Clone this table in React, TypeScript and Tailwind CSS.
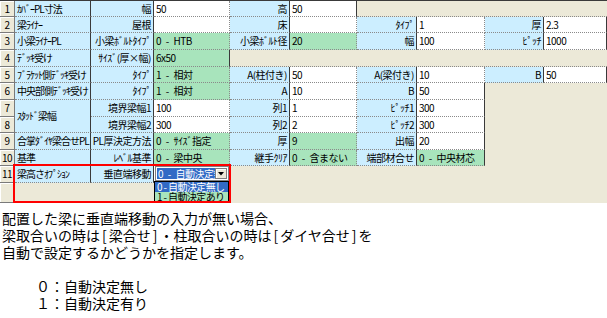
import React from "react";

type K = "l1" | "l2" | "lab" | "val" | "grn" | "bg" | "sel";
interface Cell {
  k: K;
  t?: string;
  span?: 2 | 4 | 6 | 9;
  end?: boolean;
  bb?: boolean;
  rs?: boolean;
}

const c = (k: K, t = "", o: Partial<Cell> = {}): Cell => ({ k, t, ...o });

const rows: Cell[][] = [
  [c("l1", "ｶﾊﾞｰPL寸法"), c("l2", "幅"), c("val", "50"), c("lab", "高"), c("val", "50", { end: true }), c("bg", "", { span: 4, bb: true })],
  [c("l1", "梁ﾗｲﾅｰ"), c("l2", "屋根"), c("val", ""), c("lab", "床"), c("val", ""), c("lab", "ﾀｲﾌﾟ"), c("val", "1"), c("lab", "厚"), c("val", "2.3", { end: true })],
  [c("l1", "小梁ﾗｲﾅｰPL"), c("l2", "小梁ﾎﾞﾙﾄﾀｲﾌﾟ"), c("grn", "0 - HTB"), c("lab", "小梁ﾎﾞﾙﾄ径"), c("grn", "20"), c("lab", "幅"), c("val", "100"), c("lab", "ﾋﾟｯﾁ"), c("val", "1000", { end: true })],
  [c("l1", "ﾃﾞｯｷ受け"), c("l2", "ｻｲｽﾞ(厚×幅)"), c("grn", "6x50", { end: true }), c("bg", "", { span: 6, bb: true })],
  [c("l1", "ﾌﾞﾗｹｯﾄ側ﾃﾞｯｷ受け"), c("l2", "ﾀｲﾌﾟ"), c("grn", "1 - 相対"), c("lab", "A(柱付き)"), c("val", "50"), c("lab", "A(梁付き)"), c("val", "10"), c("lab", "B"), c("val", "50", { end: true })],
  [c("l1", "中央部側ﾃﾞｯｷ受け"), c("l2", "ﾀｲﾌﾟ"), c("grn", "1 - 相対"), c("lab", "A"), c("val", "10"), c("lab", "B"), c("val", "50", { end: true }), c("bg", "", { span: 2 })],
  [c("l1", "ｽﾀｯﾄﾞ梁幅", { rs: true }), c("l2", "境界梁幅1"), c("val", "100"), c("lab", "列1"), c("val", "1"), c("lab", "ﾋﾟｯﾁ1"), c("val", "300", { end: true }), c("bg", "", { span: 2 })],
  [c("l2", "境界梁幅2"), c("val", "300"), c("lab", "列2"), c("val", "2"), c("lab", "ﾋﾟｯﾁ2"), c("val", "300", { end: true }), c("bg", "", { span: 2 })],
  [c("l1", "合掌ﾀﾞｲﾔ梁合せPL"), c("l2", "PL厚決定方法"), c("grn", "0 - ｻｲｽﾞ指定"), c("lab", "厚"), c("grn", "9"), c("lab", "出幅"), c("val", "20", { end: true }), c("bg", "", { span: 2 })],
  [c("l1", "基準"), c("l2", "ﾚﾍﾞﾙ基準"), c("grn", "0 - 梁中央"), c("lab", "継手ｸﾘｱ"), c("grn", "0 - 含まない"), c("lab", "端部材合せ"), c("grn", "0 - 中央材芯", { end: true }), c("bg", "", { span: 2 })],
  [c("l1", "梁高さｵﾌﾟｼｮﾝ"), c("l2", "垂直端移動"), c("sel"), c("bg", "", { span: 6 })],
];

const base =
  "flex items-center min-w-0 overflow-hidden whitespace-pre border-b border-r [border-bottom-style:dotted] border-b-[#8a8a8a]";

function spanClass(s?: number) {
  if (s === 2) return "col-span-2";
  if (s === 4) return "col-span-4";
  if (s === 6) return "col-span-6";
  if (s === 9) return "col-span-9";
  return "";
}

function CellView({ cell }: { cell: Cell }) {
  const { k, t } = cell;
  if (k === "bg") {
    return (
      <div
        className={
          "bg-[#ECE9D8] " +
          spanClass(cell.span) +
          (cell.bb ? " border-b [border-bottom-style:dotted] border-b-[#8a8a8a]" : "")
        }
      />
    );
  }
  if (k === "sel") {
    return (
      <div className="bg-white border-b border-r border-r-[#3a3a3a] [border-bottom-style:dotted] border-b-[#8a8a8a] pl-[1px] flex items-start">
        <div className="flex h-[15px] w-[74px] border border-[#7f7f7f] bg-white p-[1px]">
          <div className="flex-1 min-w-0 bg-[#316AC5] text-white pl-[1px] overflow-hidden whitespace-pre flex items-center">
            0 - 自動決定無し
          </div>
          <div className="w-[12px] shrink-0 bg-[#ECE9D8] border border-[#808080] shadow-[inset_1px_1px_0_#ffffff] flex items-center justify-center">
            <svg width="6" height="4" viewBox="0 0 6 4">
              <polygon points="0,0 6,0 3,3.5" fill="#000" />
            </svg>
          </div>
        </div>
      </div>
    );
  }
  let cls = base;
  if (k === "l1") cls += " bg-[#CCEEFF] pl-[2px] border-r-[#3a3a3a] tracking-[-1px]";
  if (k === "l2" || k === "lab") cls += " bg-[#CCEEFF] justify-end pr-[2px] border-r-[#3a3a3a]";
  if (k === "val")
    cls += cell.end
      ? " bg-white pl-[2px] border-r-[#3a3a3a]"
      : " bg-white pl-[2px] [border-right-style:dotted] border-r-[#8a8a8a]";
  if (k === "grn")
    cls += cell.end
      ? " bg-[#A8E4BC] pl-[2px] border-r-[#3a3a3a]"
      : " bg-[#A8E4BC] pl-[2px] [border-right-style:dotted] border-r-[#8a8a8a]";
  if (cell.rs) cls += " row-span-2";
  return <div className={cls}>{t}</div>;
}

const rowNum =
  "flex items-center justify-center bg-[#ECE9D8] border-r border-b border-r-[#7a7a7a] border-b-[#7a7a7a] shadow-[inset_1px_1px_0_#ffffff]";

export default function App() {
  return (
    <div className="w-[607px] h-[318px] bg-white overflow-hidden font-['Noto_Sans_CJK_JP','Noto_Sans',sans-serif] text-black">
      <div className="relative">
        <div className="grid grid-cols-[15px_76px_63px_76px_60px_67px_60px_68px_59px_63px] grid-rows-[16px_16px_17px_17px_16px_17px_17px_16px_17px_16px_17px_20px] border-t border-t-[#3a3a3a] bg-[#ECE9D8] text-[10px] leading-none tracking-[-0.5px] [word-spacing:3px]">
          {rows.map((r, i) => (
            <React.Fragment key={i}>
              <div className={rowNum}>{i + 1}</div>
              {r.map((cell, j) => (
                <CellView key={j} cell={cell} />
              ))}
            </React.Fragment>
          ))}
          <div className={rowNum} />
          <div className="col-span-9 bg-[#ECE9D8]" />
        </div>
        <div className="absolute left-[154px] top-[181px] w-[75px] h-[21px] border border-[#000000] bg-[#A8E4BC] text-[10px] leading-none tracking-[-0.6px] flex flex-col">
          <div className="h-[10px] bg-[#316AC5] text-white pl-[2px] whitespace-pre overflow-hidden flex items-center">
            0 - 自動決定無し
          </div>
          <div className="h-[9px] pl-[2px] whitespace-pre overflow-hidden flex items-center">
            1 - 自動決定あり
          </div>
        </div>
        <div className="absolute left-[13px] top-[164px] w-[218px] h-[39px] border-2 border-[#FF0000] z-10" />
      </div>
      <div className="pt-[7px] pl-[2px] text-[14px] leading-[17px]">
        <div>配置した梁に垂直端移動の入力が無い場合、</div>
        <div>
          梁取合いの時は<span className="mx-[2px]">[</span>梁合せ<span className="mx-[2px]">]</span>・柱取合いの時は
          <span className="mx-[2px]">[</span>ダイヤ合せ<span className="mx-[2px]">]</span>を
        </div>
        <div>自動で設定するかどうかを指定します。</div>
        <div className="h-[17px]" />
        <div className="pl-[34px]">０：自動決定無し</div>
        <div className="pl-[34px]">１：自動決定有り</div>
      </div>
    </div>
  );
}
